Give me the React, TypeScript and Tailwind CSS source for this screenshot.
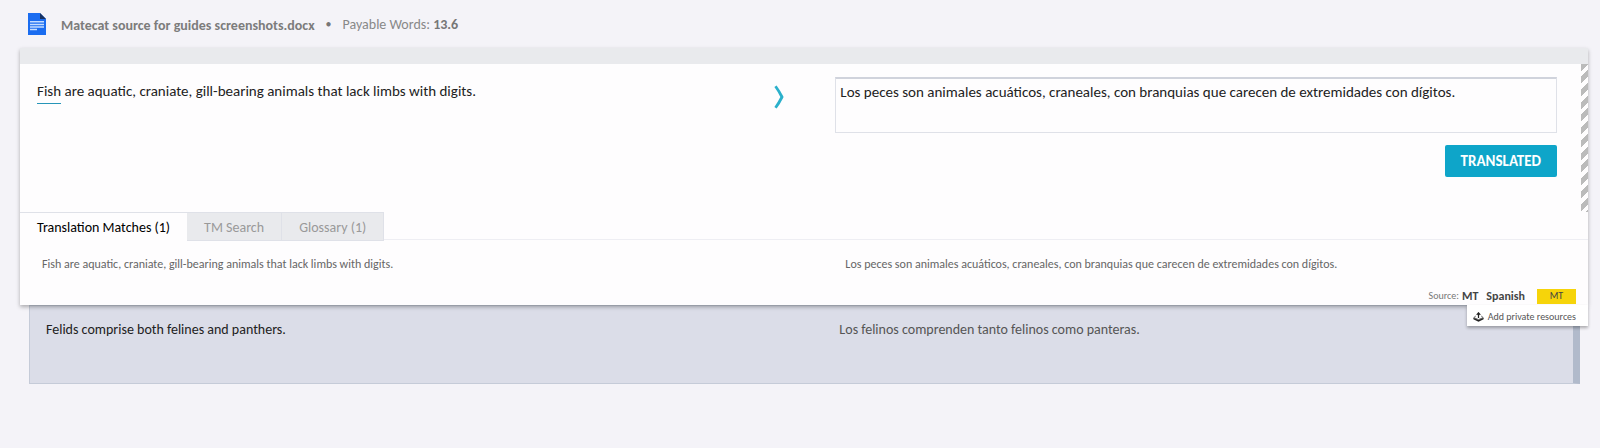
import { useState } from "react";

const tabs = ["Translation Matches (1)", "TM Search", "Glossary (1)"];

function DocIcon() {
  return (
    <svg className="shrink-0" width="18" height="22" viewBox="0 0 18 22" aria-hidden="true">
      <path d="M0 0h12l6 6v16H0z" fill="#1a6cf0" />
      <path d="M12 0l6 6h-6z" fill="#173263" />
      <path d="M2 8.7h14M2 11.5h14M2 14h14M2 16.5h7" stroke="#c4dcff" strokeWidth="1.4" />
    </svg>
  );
}

function UploadIcon() {
  return (
    <svg width="11" height="10" viewBox="0 0 11 10" aria-hidden="true">
      <path d="M5.5 6V1M3.7 2.8l1.8-2 1.8 2" fill="none" stroke="#222" strokeWidth="1.2" />
      <path d="M2.8 4L.8 5.6l4.7 2 4.7-2-2-1.6" fill="none" stroke="#555" strokeWidth=".9" />
      <path d="M.4 5.8v1.4l5.1 2.6 5.1-2.6V5.8L5.5 8z" fill="#222" />
    </svg>
  );
}

function Chevron() {
  return (
    <svg className="shrink-0" width="10" height="24" viewBox="0 0 10 24" aria-hidden="true">
      <path d="M1.5 1.2Q5 6 8 12Q5 18 1.5 22.8" fill="none" stroke="#2bb0cb" strokeWidth="2.8" />
    </svg>
  );
}

function Pointer() {
  return (
    <svg
      className="pointer-events-none absolute left-[717px] top-[192px]"
      width="10"
      height="15"
      viewBox="0 0 10 15"
      aria-hidden="true"
    >
      <path d="M1 1v11l2.5-2.3 1.8 4 1.6-.7-1.7-3.8H8.6z" fill="#fff" stroke="#777" strokeWidth=".9" />
    </svg>
  );
}

export default function App() {
  const [active, setActive] = useState(0);
  const [target, setTarget] = useState(
    "Los peces son animales acuáticos, craneales, con branquias que carecen de extremidades con dígitos."
  );

  return (
    <div className="relative min-h-screen bg-[#f4f3f8] pr-3 pl-5 font-[Carlito,Lato,sans-serif] text-[#222]">
      {/* File header */}
      <header className="flex h-12 items-center pl-2 text-sm text-[#888]">
        <DocIcon />
        <h1 className="ml-[15px] pt-1 font-bold text-[#7c7c7c]">Matecat source for guides screenshots.docx</h1>
        <span className="mx-[11px] text-xs text-[#777]">•</span>
        <p className="pt-px">
          Payable Words: <strong className="text-[#777]">13.6</strong>
        </p>
      </header>

      {/* Open segment */}
      <section className="relative z-10 bg-[#fefdfe] shadow-[0_2px_4px_rgba(0,0,0,0.3)]">
        <div className="h-4 bg-[#e9eaed]" />
        <div className="flex h-[148px]">
          <div className="flex w-[52%] items-start justify-between pt-[15px] pr-[51px] pl-[17px]">
            <p className="text-[15px] leading-6">
              <span className="inline-block border-b border-[#2795b8]">Fish</span> are aquatic, craniate, gill-bearing
              animals that lack limbs with digits.
            </p>
            <div className="pt-[6px]">
              <Chevron />
            </div>
          </div>
          <div className="flex-1 pt-[13px]">
            <textarea
              aria-label="Translation"
              className="block h-14 w-full resize-none border border-t-2 border-[#dfe1e8] border-t-[#d0d3dc] bg-transparent px-1 pt-px text-[15px] leading-6 outline-none"
              value={target}
              onChange={(e) => setTarget(e.target.value)}
            />
            <div className="mt-3 flex justify-end">
              <button className="h-8 rounded-xs bg-[#0ea5c9] px-4 text-[15px] font-bold text-white">TRANSLATED</button>
            </div>
          </div>
          <div className="ml-6 w-[7px] bg-[repeating-linear-gradient(135deg,#bbb_0_5px,#fefdfe_5px_9px)]" />
        </div>

        {/* Tabs */}
        <div role="tablist" className="flex h-7 border-b border-[#eeeef3]">
          {tabs.map((tab, i) => (
            <button
              key={tab}
              role="tab"
              aria-selected={active === i}
              onClick={() => setActive(i)}
              className={`border-t border-[#dfe1e8] px-[17px] pt-[2px] text-sm ${
                active === i ? "h-7 bg-[#fefdfe] text-black" : "h-[29px] border-r border-b bg-[#e9eaed] text-[#999]"
              }`}
            >
              {tab}
            </button>
          ))}
        </div>

        {/* Match */}
        <div className="h-[65px] pt-4 text-xs text-[#666]">
          <div className="flex">
            <p className="w-[52%] pl-[22px]">
              Fish are aquatic, craniate, gill-bearing animals that lack limbs with digits.
            </p>
            <p className="pl-[10px]">
              Los peces son animales acuáticos, craneales, con branquias que carecen de extremidades con dígitos.
            </p>
          </div>
          <div className="mt-4 flex h-4 items-center justify-end pr-3 text-[#444]">
            <span className="mr-[3px] text-[10px] text-[#777]">Source:</span>
            <strong>MT</strong>
            <strong className="mr-3 ml-2">Spanish</strong>
            <span className="flex h-[15px] w-[39px] items-center justify-center bg-[#f6d40a] text-[10px]">MT</span>
          </div>
        </div>
        <button className="absolute top-full right-0 flex h-[21px] items-center gap-1 bg-white pt-[2px] pr-3 pl-[6px] text-[10px] text-[#555] shadow-[0_2px_3px_rgba(0,0,0,0.3)]">
          <UploadIcon />
          Add private resources
        </button>
      </section>

      {/* Next segment */}
      <section className="mr-2 ml-[9px] flex h-[79px] border border-r-[7px] border-[#c5cbd8] border-r-[#b1bacb] bg-[#dbdde8] pt-[14px] text-sm">
        <p className="w-[52%] pl-4">Felids comprise both felines and panthers.</p>
        <p className="pl-[7px] text-[#555]">Los felinos comprenden tanto felinos como panteras.</p>
      </section>
      <Pointer />
    </div>
  );
}
